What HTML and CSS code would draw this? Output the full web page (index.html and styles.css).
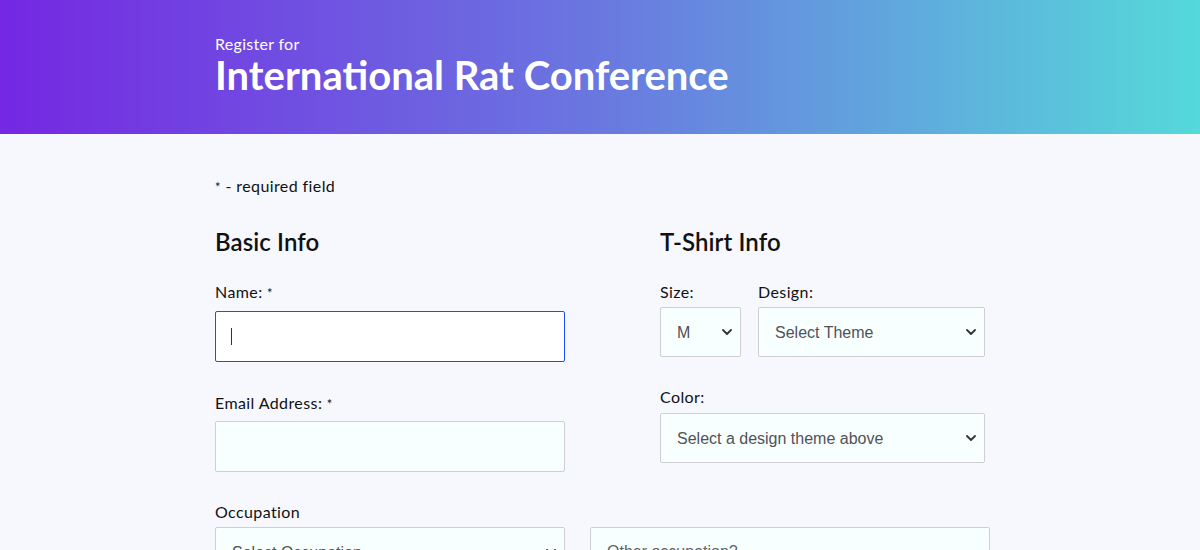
FILE: index.html
```html
<!DOCTYPE html>
<html lang="en">
<head>
<meta charset="utf-8">
<title>Register for International Rat Conference</title>
<link rel="stylesheet" href="styles.css">
</head>
<body>
<header class="hero">
  <div class="wrap">
    <p class="hero-sub">Register for</p>
    <h1 class="hero-title">International Rat Conference</h1>
  </div>
</header>
<main class="wrap form">
  <p class="note"><span class="star">*</span> - required field</p>
  <div class="cols">
    <section class="col-basic">
      <h2 class="sec-title">Basic Info</h2>
      <div class="field field-name">
        <label class="lbl lbl-text" for="name">Name: <span class="star">*</span></label>
        <div class="ctrl-wrap">
          <input class="ctrl text focused" id="name" type="text">
          <span class="caret"></span>
        </div>
      </div>
      <div class="field field-email">
        <label class="lbl lbl-email" for="email">Email Address: <span class="star">*</span></label>
        <input class="ctrl text" id="email" type="email">
      </div>
      <div class="field field-occ">
        <label class="lbl" for="occ">Occupation</label>
        <div class="occ-row">
          <div class="ctrl-wrap">
            <select class="ctrl sel occ-sel" id="occ"><option>Select Occupation</option></select>
            <svg class="chev" width="10" height="6" viewBox="0 0 10 6"><path d="M1 1 L5 5 L9 1" fill="none" stroke="#333" stroke-width="1.8" stroke-linecap="round" stroke-linejoin="round"/></svg>
          </div>
          <input class="ctrl other" type="text" placeholder="Other occupation?">
        </div>
      </div>
    </section>
    <section class="col-shirt">
      <h2 class="sec-title">T-Shirt Info</h2>
      <div class="shirt-row">
        <div class="field">
          <label class="lbl" for="size">Size:</label>
          <div class="ctrl-wrap">
            <select class="ctrl sel size-sel" id="size"><option>M</option></select>
            <svg class="chev" width="10" height="6" viewBox="0 0 10 6"><path d="M1 1 L5 5 L9 1" fill="none" stroke="#333" stroke-width="1.8" stroke-linecap="round" stroke-linejoin="round"/></svg>
          </div>
        </div>
        <div class="field">
          <label class="lbl" for="design">Design:</label>
          <div class="ctrl-wrap">
            <select class="ctrl sel design-sel" id="design"><option>Select Theme</option></select>
            <svg class="chev" width="10" height="6" viewBox="0 0 10 6"><path d="M1 1 L5 5 L9 1" fill="none" stroke="#333" stroke-width="1.8" stroke-linecap="round" stroke-linejoin="round"/></svg>
          </div>
        </div>
      </div>
      <div class="field field-color">
        <label class="lbl lbl-color" for="color">Color:</label>
        <div class="ctrl-wrap">
          <select class="ctrl sel color-sel" id="color"><option>Select a design theme above</option></select>
          <svg class="chev" width="10" height="6" viewBox="0 0 10 6"><path d="M1 1 L5 5 L9 1" fill="none" stroke="#333" stroke-width="1.8" stroke-linecap="round" stroke-linejoin="round"/></svg>
        </div>
      </div>
    </section>
  </div>
</main>
</body>
</html>
```

FILE: styles.css
```css
* { box-sizing: border-box; }
html, body { margin: 0; padding: 0; }
body {
  background: #f7f8fd;
  font-family: "Lato", "Open Sans", sans-serif;
  color: #111;
  overflow: hidden;
}
.wrap {
  width: 770px;
  margin: 0 auto;
}
.hero {
  height: 134px;
  background: linear-gradient(90deg, #7527e2 0%, #6a78e0 50%, #55d9da 100%);
  color: #fff;
  padding-top: 34px;
}
.hero-sub {
  margin: 0;
  font-size: 16px;
  line-height: 20px;
  letter-spacing: 0.3px;
}
.hero-title {
  margin: 0;
  font-size: 40px;
  line-height: 42px;
  font-weight: 700;
  letter-spacing: 0;
}
.form { padding-top: 42px; }
.note {
  margin: 0;
  font-size: 16px;
  line-height: 20px;
  letter-spacing: 0.4px;
}
.star { font-size: 13px; }
.cols {
  display: grid;
  grid-template-columns: 445px 325px;
  margin-top: 30px;
}
.sec-title {
  margin: 0 0 25px;
  font-size: 24px;
  line-height: 30px;
  font-weight: 600;
  letter-spacing: 0.1px;
}
.lbl {
  display: block;
  font-size: 16px;
  line-height: 20px;
  margin-bottom: 5px;
  letter-spacing: 0.4px;
}
.lbl-text { margin-bottom: 8px; }
.lbl-email { margin-bottom: 7px; }
.lbl-color { margin-bottom: 6px; }
.ctrl-wrap {
  position: relative;
  width: max-content;
}
.ctrl {
  display: block;
  height: 50px;
  border: 1px solid #cfcfd2;
  border-radius: 2px;
  background: #f8ffff;
  font-family: "Liberation Sans", Arial, sans-serif;
  font-size: 16px;
  color: #505257;
  padding: 0 28px 0 16px;
  margin: 0;
  appearance: none;
  -webkit-appearance: none;
  outline: none;
}
.text {
  width: 350px;
  height: 51px;
}
.focused {
  background: #fff;
  border-color: #1a4dff;
}
.caret {
  position: absolute;
  left: 16px;
  top: 17px;
  width: 1px;
  height: 17px;
  background: #333;
}
.chev {
  position: absolute;
  right: 9px;
  top: 22px;
  pointer-events: none;
}
.field-name { margin-bottom: 31px; }
.field-email { margin-bottom: 30px; }
.occ-row {
  display: flex;
  gap: 25px;
  width: 775px;
}
.occ-sel { width: 350px; }
.other { width: 400px; padding-right: 16px; }
.other::placeholder { color: #606266; }
.shirt-row {
  display: flex;
  gap: 17px;
  margin-bottom: 30px;
}
.size-sel { width: 81px; }
.design-sel { width: 227px; }
.color-sel { width: 325px; }
```
